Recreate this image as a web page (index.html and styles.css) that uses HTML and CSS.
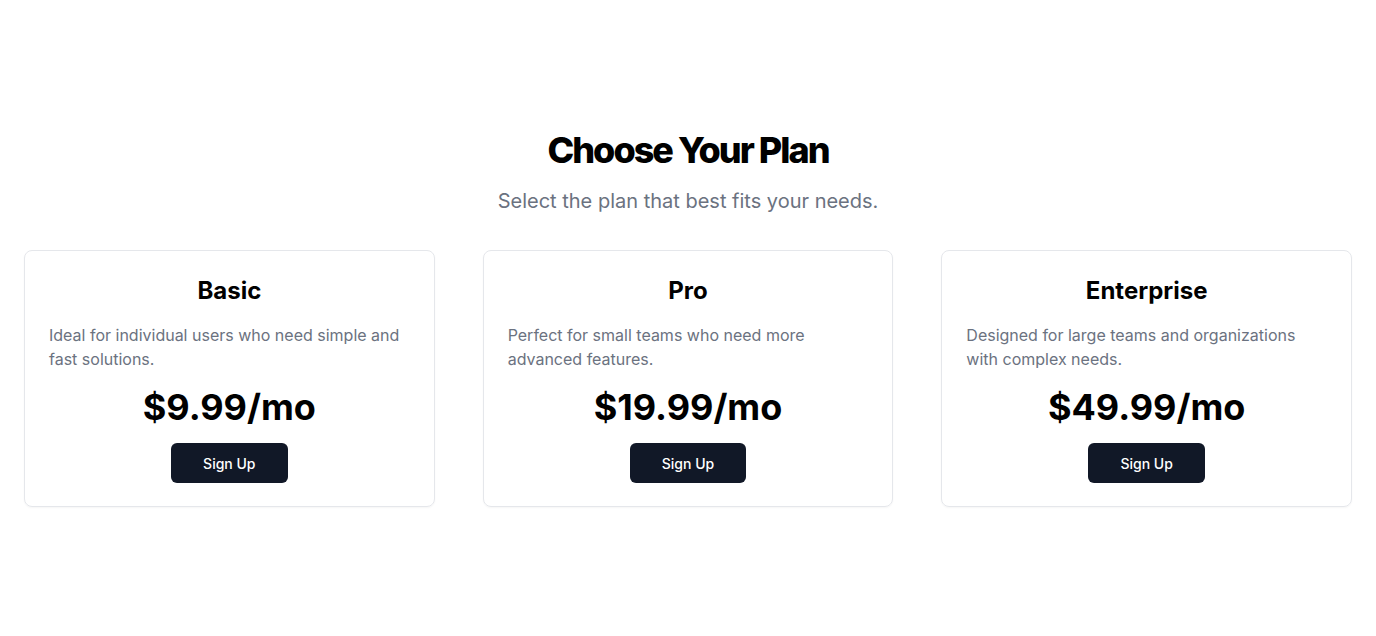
FILE: index.html
```html
<!DOCTYPE html>
<html lang="en">
<head>
<meta charset="utf-8">
<title>Choose Your Plan</title>
<link rel="stylesheet" href="styles.css">
</head>
<body>
<main class="page">
  <section class="pricing">
    <h1 class="title">Choose Your Plan</h1>
    <p class="subtitle">Select the plan that best fits your needs.</p>
    <div class="cards">
      <div class="card">
        <h2 class="card-title">Basic</h2>
        <p class="card-desc">Ideal for individual users who need simple and fast solutions.</p>
        <div class="price">$9.99/mo</div>
        <button class="btn">Sign Up</button>
      </div>
      <div class="card">
        <h2 class="card-title">Pro</h2>
        <p class="card-desc">Perfect for small teams who need more advanced features.</p>
        <div class="price">$19.99/mo</div>
        <button class="btn">Sign Up</button>
      </div>
      <div class="card">
        <h2 class="card-title">Enterprise</h2>
        <p class="card-desc">Designed for large teams and organizations with complex needs.</p>
        <div class="price">$49.99/mo</div>
        <button class="btn">Sign Up</button>
      </div>
    </div>
  </section>
</main>
</body>
</html>
```
FILE: styles.css
```css
* { box-sizing: border-box; }
html, body { margin: 0; padding: 0; }
body {
  font-family: Inter, "Noto Sans", sans-serif;
  background: #fff;
  color: #000;
}
.page {
  min-height: 100vh;
  display: flex;
  align-items: center;
  justify-content: center;
  padding: 1px 24px 0;
}
.pricing {
  width: 100%;
  text-align: center;
}
.title {
  margin: 0 0 17px;
  font-size: 36px;
  line-height: 40px;
  font-weight: 800;
  letter-spacing: -0.055em;
}
.subtitle {
  margin: 0 0 35px;
  font-size: 20px;
  line-height: 28px;
  color: #6b7280;
}
.cards {
  display: grid;
  grid-template-columns: repeat(3, 1fr);
  gap: 48px;
}
.card {
  border: 1px solid #e5e7eb;
  border-radius: 8px;
  padding: 24px 24px 23px;
  box-shadow: 0 1px 2px rgba(0,0,0,0.04);
  display: flex;
  flex-direction: column;
  align-items: center;
}
.card-title {
  margin: 0 0 16px;
  font-size: 24px;
  line-height: 32px;
  font-weight: 700;
}
.card-desc {
  margin: 0 0 16px;
  font-size: 16px;
  line-height: 24px;
  color: #6b7280;
  text-align: left;
  align-self: stretch;
}
.price {
  font-size: 36px;
  line-height: 40px;
  font-weight: 700;
  margin-bottom: 16px;
}
.btn {
  font-family: Inter, "Noto Sans", sans-serif;
  background: #111827;
  color: #fff;
  border: 0;
  border-radius: 6px;
  height: 40px;
  padding: 0 32px;
  font-size: 14px;
  font-weight: 500;
}
```
